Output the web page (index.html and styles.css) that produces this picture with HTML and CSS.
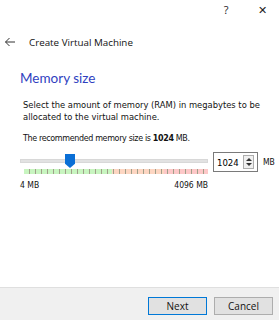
FILE: index.html
```html
<!DOCTYPE html>
<html lang="en">
<head>
  <meta charset="UTF-8">
  <title>Create Virtual Machine</title>
  <link rel="stylesheet" href="styles.css">
</head>
<body>

<div class="window">
  <div class="titlebar">
    <span class="tb-btn">?</span>
    <span class="tb-btn close">&#x2715;</span>
  </div>

  <div class="header">
    <svg class="back" width="12" height="10" viewBox="0 0 12 10">
      <path d="M11 5H1.5M5.5 1L1.5 5l4 4" fill="none" stroke="#333" stroke-width="1"/>
    </svg>
    <span class="wizard-title">Create Virtual Machine</span>
  </div>

  <div class="page">
    <h1 class="page-title">Memory size</h1>
    <p class="desc">Select the amount of memory (RAM) in megabytes to be allocated to the virtual machine.</p>
    <p class="desc rec">The recommended memory size is <b>1024</b> MB.</p>

    <div class="mem-row">
      <div class="slider">
        <div class="track"></div>
        <div class="thumb"></div>
        <div class="ticks"></div>
        <div class="scale">
          <span>4 MB</span>
          <span>4096 MB</span>
        </div>
      </div>
      <div class="spin">
        <span class="spin-val">1024</span>
        <span class="spin-btns">
          <span class="arrow up"></span>
          <span class="arrow down"></span>
        </span>
      </div>
      <span class="unit">MB</span>
    </div>
  </div>

  <div class="footer">
    <button class="btn default">Next</button>
    <button class="btn">Cancel</button>
  </div>
</div>

</body>
</html>
```
FILE: styles.css
```css
* {
  margin: 0;
  padding: 0;
  box-sizing: border-box;
}

html, body {
  height: 100%;
  background: #fff;
  color: #000;
  font-family: Tahoma, "DejaVu Sans", sans-serif;
  overflow: hidden;
}

.window {
  display: flex;
  flex-direction: column;
  height: 320px;
  width: 279px;
}

.titlebar {
  display: flex;
  justify-content: flex-end;
  height: 22px;
  padding-right: 7px;
  font-family: "Open Sans", sans-serif;
  font-size: 11px;
  color: #222;
}

.tb-btn {
  width: 20px;
  text-align: center;
  line-height: 20px;
}

.tb-btn.close {
  margin-left: 16px;
  font-size: 11px;
}

.header {
  display: flex;
  align-items: center;
  height: 40px;
  padding-left: 4px;
}

.back {
  margin-right: 13px;
}

.wizard-title {
  font-family: "Open Sans", sans-serif;
  font-size: 9.8px;
  color: #111;
}

.page {
  flex: 1;
  padding: 5px 0 0 20px;
}

.page-title {
  font-family: Lato, sans-serif;
  font-weight: normal;
  font-size: 13.5px;
  color: #2f3fbf;
  height: 22px;
  line-height: 22px;
  margin-bottom: 10px;
}

.desc {
  font-family: "DejaVu Sans Condensed", "DejaVu Sans", sans-serif;
  font-size: 9.3px;
  line-height: 12px;
  color: #111;
  padding-left: 3px;
  width: 240px;
}

.desc.rec {
  margin-top: 9px;
  font-size: 8.9px;
  letter-spacing: -0.35px;
}

.mem-row {
  display: flex;
  align-items: flex-start;
  margin-top: 7px;
}

.slider {
  position: relative;
  flex-shrink: 0;
  width: 188px;
  height: 42px;
}

.track {
  position: absolute;
  top: 8px;
  left: 0;
  right: 0;
  height: 4px;
  background: #e2e2e2;
  border: 1px solid #d8d8d8;
}

.thumb {
  position: absolute;
  top: 3px;
  left: 45px;
  width: 10px;
  height: 14px;
  background: #0a6fd6;
  clip-path: polygon(0 0, 100% 0, 100% 70%, 50% 100%, 0 70%);
}

.ticks {
  position: absolute;
  top: 18px;
  left: 4px;
  right: 0;
  height: 5px;
  background:
    repeating-linear-gradient(to right, transparent 0, transparent 5px, #a0a08a 5px, #a0a08a 6px),
    linear-gradient(to right, #c8f5c0 0, #c8f5c0 48%, #fdd6c2 48%, #fdd6c2 76%, #fdc8c8 76%, #fdc8c8 100%);
}

.scale {
  position: absolute;
  top: 29px;
  left: 0;
  right: 0;
  display: flex;
  justify-content: space-between;
  font-family: "DejaVu Sans Condensed", sans-serif;
  font-size: 8.5px;
  color: #111;
}

.spin {
  display: flex;
  flex-shrink: 0;
  align-items: center;
  margin-left: 5px;
  margin-top: 1px;
  width: 45px;
  height: 20px;
  border: 1px solid #7a7a7a;
  background: #fff;
}

.spin-val {
  flex: 1;
  padding-left: 3px;
  font-family: "DejaVu Sans Condensed", sans-serif;
  font-size: 9.5px;
}

.spin-btns {
  display: flex;
  flex-direction: column;
  justify-content: center;
  gap: 2px;
  width: 11px;
  height: 14px;
  margin-right: 3px;
  border: 1px solid #adadad;
  background: #f0f0f0;
  align-items: center;
}

.arrow {
  width: 0;
  height: 0;
  border-left: 3px solid transparent;
  border-right: 3px solid transparent;
}

.arrow.up {
  border-bottom: 3px solid #333;
}

.arrow.down {
  border-top: 3px solid #333;
}

.unit {
  flex-shrink: 0;
  margin-left: 5px;
  margin-top: 6px;
  font-family: "DejaVu Sans Condensed", sans-serif;
  font-size: 8.5px;
  color: #111;
}

.footer {
  display: flex;
  justify-content: flex-end;
  gap: 7px;
  height: 33px;
  padding: 9px 6px 0 0;
  background: #f0f0f0;
  border-top: 1px solid #dfdfdf;
}

.btn {
  width: 59px;
  height: 18px;
  font-family: "Open Sans", sans-serif;
  font-size: 10px;
  color: #111;
  background: #e1e1e1;
  border: 1px solid #adadad;
}

.btn.default {
  border: 1px solid #0078d7;
}
```
